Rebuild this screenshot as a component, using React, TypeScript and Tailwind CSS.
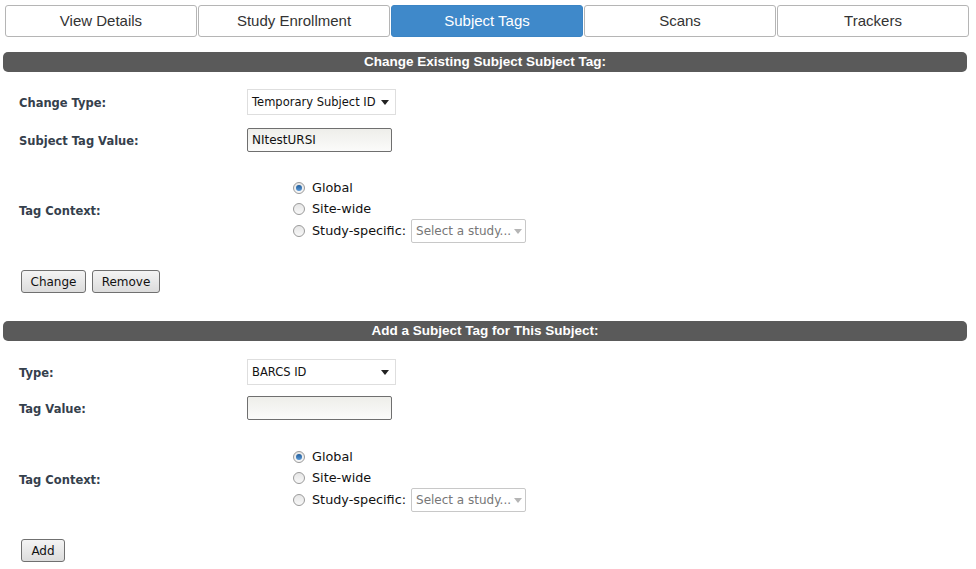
import React from "react";

const tabs = ["View Details", "Study Enrollment", "Subject Tags", "Scans", "Trackers"];

function Caret({ light = false }: { light?: boolean }) {
  return (
    <svg width="8" height="5" viewBox="0 0 8 5" className="shrink-0">
      <path d="M0 0h8L4 5z" fill={light ? "#b5b5b5" : "#222"} />
    </svg>
  );
}

function Radio({ checked = false }: { checked?: boolean }) {
  return (
    <span className="relative inline-flex h-[12px] w-[12px] shrink-0 items-center justify-center rounded-full border border-[#9a9a9a] bg-gradient-to-b from-[#e6e6e6] to-[#f8f8f8]">
      {checked && (
        <span className="h-[6px] w-[6px] rounded-full bg-gradient-to-b from-[#1f5c99] to-[#5b9ad8]" />
      )}
    </span>
  );
}

function SectionBar({ title }: { title: string }) {
  return (
    <div className="mx-[3px] flex h-[20px] w-[964px] items-center justify-center rounded-[5px] bg-[#5a5a5a] font-['Liberation_Sans',sans-serif] text-[13.5px] font-bold text-white">
      {title}
    </div>
  );
}

function Label({ children }: { children: React.ReactNode }) {
  return (
    <div className="w-[247px] shrink-0 pl-[19px] pt-[3px] font-['DejaVu_Sans',sans-serif] text-[11.5px] font-bold text-[#35404c]">
      {children}
    </div>
  );
}

function Select({ value }: { value: string }) {
  return (
    <div className="flex h-[26px] w-[149px] items-center border border-[#dedede] bg-white pl-[4px] pr-[6px] pt-[1px] text-[11.5px] text-[#111]">
      <span className="whitespace-nowrap">{value}</span>
      <span className="ml-auto">
        <Caret />
      </span>
    </div>
  );
}

function TextBox({ value }: { value?: string }) {
  return (
    <div className="flex h-[24px] w-[145px] items-center rounded-[2px] border border-[#6f6f6f] bg-gradient-to-b from-[#eeeeea] to-[#fbfbfa] pl-[4px] text-[12px] text-[#111]">
      {value}
    </div>
  );
}

function TagContext() {
  return (
    <div className="flex items-center">
      <Label>Tag Context:</Label>
      <div className="ml-[46px] flex flex-col text-[12.8px] text-[#111]">
        <div className="flex h-[21px] items-center gap-[7px]">
          <Radio checked />
          <span>Global</span>
        </div>
        <div className="flex h-[21px] items-center gap-[7px]">
          <Radio />
          <span>Site-wide</span>
        </div>
        <div className="flex h-[24px] items-center gap-[7px]">
          <Radio />
          <span>Study-specific:</span>
          <div className="-ml-[2px] flex h-[24px] w-[115px] items-center rounded-[2px] border border-[#c8c8c8] bg-white pl-[4px] pr-[3px] text-[12px] text-[#777]">
            <span className="whitespace-nowrap">Select a study...</span>
            <span className="ml-auto">
              <Caret light />
            </span>
          </div>
        </div>
      </div>
    </div>
  );
}

function Button({ children, w }: { children: React.ReactNode; w: string }) {
  return (
    <button
      className={`flex h-[23px] ${w} items-center justify-center rounded-[3px] border border-[#707070] bg-gradient-to-b from-[#f4f4f4] to-[#dcdcdc] text-[12px] text-[#111]`}
    >
      {children}
    </button>
  );
}

export default function App() {
  return (
    <div className="min-h-[569px] w-[976px] bg-white font-['DejaVu_Sans',sans-serif]">
      <nav className="flex w-[974px] gap-[1px] px-[5px] pt-[5px]">
        {tabs.map((t) => (
          <div
            key={t}
            className={
              t === "Subject Tags"
                ? "flex h-[32px] flex-1 items-center justify-center rounded-[3px] border border-[#3b84c4] bg-[#3f89ca] font-['Liberation_Sans',sans-serif] text-[15px] text-white"
                : "flex h-[32px] flex-1 items-center justify-center rounded-[3px] border border-[#b5b5b5] bg-white font-['Liberation_Sans',sans-serif] text-[15px] text-[#333]"
            }
          >
            {t}
          </div>
        ))}
      </nav>

      <div className="mt-[15px]">
        <SectionBar title="Change Existing Subject Subject Tag:" />
      </div>
      <div className="mt-[17px] flex items-center">
        <Label>Change Type:</Label>
        <Select value="Temporary Subject ID" />
      </div>
      <div className="mt-[13px] flex items-center">
        <Label>Subject Tag Value:</Label>
        <TextBox value="NItestURSI" />
      </div>
      <div className="mt-[25px]">
        <TagContext />
      </div>
      <div className="ml-[21px] mt-[27px] flex gap-[6px]">
        <Button w="w-[65px]">Change</Button>
        <Button w="w-[68px]">Remove</Button>
      </div>

      <div className="mt-[28px]">
        <SectionBar title="Add a Subject Tag for This Subject:" />
      </div>
      <div className="mt-[18px] flex items-center">
        <Label>Type:</Label>
        <Select value="BARCS ID" />
      </div>
      <div className="mt-[11px] flex items-center">
        <Label>Tag Value:</Label>
        <TextBox />
      </div>
      <div className="mt-[26px]">
        <TagContext />
      </div>
      <div className="ml-[21px] mt-[27px] flex pb-[7px]">
        <Button w="w-[44px]">Add</Button>
      </div>
    </div>
  );
}
